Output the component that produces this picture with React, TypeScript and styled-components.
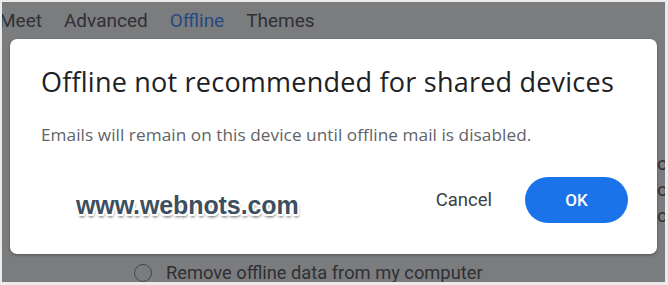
import React from "react";
import styled, { createGlobalStyle } from "styled-components";

const Global = createGlobalStyle`
  html, body { margin: 0; padding: 0; background: #ebebeb; }
  body { width: 668px; height: 285px; overflow: hidden; font-family: Roboto, "Liberation Sans", sans-serif; }
`;

const Frame = styled.div`
  width: 668px;
  height: 285px;
  box-sizing: border-box;
  padding: 2px 3px 3px 2px;
  background: #ebebeb;
`;

const Page = styled.div`
  position: relative;
  width: 100%;
  height: 100%;
  background: #7b7c7e;
  overflow: hidden;
  display: flex;
  flex-direction: column;
`;

const Tabs = styled.div`
  display: flex;
  gap: 22px;
  margin-left: -3px;
  height: 36px;
  align-items: center;
  font-size: 19px;
  color: #2f3033;
`;

const Tab = styled.span<{ $active?: boolean }>`
  color: ${(p) => (p.$active ? "#254a80" : "#2f3033")};
`;

const Body = styled.div`
  flex: 1;
  display: flex;
  justify-content: flex-end;
`;

const SideColumn = styled.div`
  width: 8px;
  padding-top: 116px;
  display: flex;
  flex-direction: column;
  gap: 6px;
  font-size: 19px;
  line-height: 20px;
  color: #2f3033;
  white-space: nowrap;
  overflow: hidden;
`;

const RadioRow = styled.div`
  display: flex;
  align-items: center;
  gap: 14px;
  height: 19px;
  padding-left: 132px;
  font-size: 18.3px;
  color: #2f3033;
`;

const Radio = styled.span`
  width: 16px;
  height: 16px;
  border: 1.5px solid #45474a;
  border-radius: 50%;
`;

const Dialog = styled.div`
  position: absolute;
  left: 8px;
  top: 37px;
  width: 647px;
  height: 215px;
  box-sizing: border-box;
  background: #fff;
  border-radius: 7px;
  box-shadow: 0 1px 3px rgba(0, 0, 0, 0.35);
  padding: 25px 29px 31px 31px;
  display: flex;
  flex-direction: column;
`;

const Title = styled.h2`
  margin: 0;
  font-family: "Open Sans", Roboto, sans-serif;
  font-weight: 400;
  font-size: 27px;
  letter-spacing: 0.22px;
  line-height: 36px;
  white-space: nowrap;
  color: #202124;
`;

const Message = styled.p`
  margin: 24px 0 0;
  font-family: "Open Sans", Roboto, sans-serif;
  font-size: 17.2px;
  letter-spacing: 0.06px;
  line-height: 22px;
  color: #5f6368;
`;

const Footer = styled.div`
  margin-top: auto;
  display: flex;
  align-items: center;
  justify-content: space-between;
`;

const Watermark = styled.span`
  margin-left: 35px;
  margin-top: 10px;
  font-family: "Liberation Sans", Arial, sans-serif;
  font-weight: 700;
  font-size: 25px;
  letter-spacing: -0.1px;
  color: #3d4f5e;
  text-shadow:
    -1.5px -1.5px 0 #fff, 1.5px -1.5px 0 #fff, -1.5px 1.5px 0 #fff, 1.5px 1.5px 0 #fff,
    0 -2px 0 #fff, 0 2px 0 #fff, -2px 0 0 #fff, 2px 0 0 #fff,
    1px 3px 3px rgba(0, 0, 0, 0.65);
`;

const Actions = styled.div`
  display: flex;
  align-items: center;
  gap: 9px;
`;

const Button = styled.button<{ $primary?: boolean }>`
  border: none;
  height: 46px;
  border-radius: 23px;
  font-family: Roboto, "Liberation Sans", sans-serif;
  font-size: ${(p) => (p.$primary ? "17px" : "18.5px")};
  cursor: pointer;
  padding: 0 ${(p) => (p.$primary ? "38px" : "24px")};
  min-width: ${(p) => (p.$primary ? "103px" : "auto")};
  background: ${(p) => (p.$primary ? "#1a73e8" : "transparent")};
  color: ${(p) => (p.$primary ? "#fff" : "#3c4043")};
  font-weight: ${(p) => (p.$primary ? 500 : 400)};
`;

export default function App() {
  return (
    <>
      <Global />
      <Frame>
        <Page>
          <Tabs>
            <Tab>Meet</Tab>
            <Tab>Advanced</Tab>
            <Tab $active>Offline</Tab>
            <Tab>Themes</Tab>
          </Tabs>
          <Body>
            <SideColumn>
              <span>o</span>
              <span>o</span>
              <span>c</span>
            </SideColumn>
          </Body>
          <RadioRow>
            <Radio />
            <span>Remove offline data from my computer</span>
          </RadioRow>
          <Dialog role="dialog">
            <Title>Offline not recommended for shared devices</Title>
            <Message>Emails will remain on this device until offline mail is disabled.</Message>
            <Footer>
              <Watermark>www.webnots.com</Watermark>
              <Actions>
                <Button>Cancel</Button>
                <Button $primary>OK</Button>
              </Actions>
            </Footer>
          </Dialog>
        </Page>
      </Frame>
    </>
  );
}
